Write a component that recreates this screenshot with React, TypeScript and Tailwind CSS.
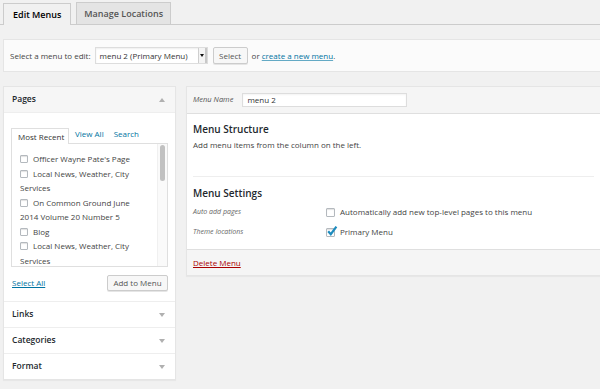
import React from "react";

const Box = ({ checked = false, size = 8 }: { checked?: boolean; size?: number }) => (
  <span
    className={`inline-flex shrink-0 items-center justify-center border border-[#b4b9be] bg-white rounded-[1px] shadow-[inset_0_1px_1px_rgba(0,0,0,0.12)] mr-[5px] align-[-1px] ${
      size === 8 ? "w-[8px] h-[8px]" : "w-[9px] h-[9px]"
    }`}
  >
    {checked && (
      <svg viewBox="0 0 10 10" className="w-[10px] h-[10px] -mt-[3px] ml-[2px] overflow-visible">
        <path d="M1.2 5.2 L3.8 8.2 L9.4 0.6" stroke="#1e8cbe" strokeWidth="2.2" fill="none" />
      </svg>
    )}
  </span>
);

const Arrow = ({ up = false }: { up?: boolean }) => (
  <svg viewBox="0 0 6 4" className="w-[6px] h-[4px]">
    <path d={up ? "M0 4 L3 0 L6 4 Z" : "M0 0 L6 0 L3 4 Z"} fill="#b0b0b0" />
  </svg>
);

const pages: React.ReactNode[] = [
  <>Officer Wayne Pate's Page</>,
  <>
    Local News, Weather, City
    <br />
    Services
  </>,
  <>
    On Common Ground June
    <br />
    2014 Volume 20 Number 5
  </>,
  <>Blog</>,
  <>
    Local News, Weather, City
    <br />
    Services
  </>,
];

const Section = ({ title }: { title: string }) => (
  <div className="h-[26px] border-t border-[#eeeeee] flex items-center justify-between pl-[8px] pr-[10px]">
    <span className="text-[8.5px] font-semibold text-[#23282d]">{title}</span>
    <Arrow />
  </div>
);

export default function App() {
  return (
    <div className="w-[600px] h-[389px] overflow-hidden bg-[#f1f1f1] font-['Open_Sans',sans-serif] text-[#444]">
      {/* tabs */}
      <div className="h-[25px] border-b border-[#cccccc] flex items-end pl-[3px] gap-[5px]">
        <div className="h-[22px] -mb-px px-[9px] flex items-center border border-b-0 border-[#cccccc] bg-[#f1f1f1] text-[9px] font-semibold text-[#000]">
          Edit Menus
        </div>
        <div className="h-[22px] px-[7px] flex items-center border border-b-0 border-[#cccccc] bg-[#e4e4e4] text-[9px] font-semibold text-[#555]">
          Manage Locations
        </div>
      </div>

      {/* manage menus bar */}
      <div className="mt-[14px] ml-[3px] h-[33px] bg-[#fbfbfb] border border-r-0 border-[#e5e5e5] flex items-center pl-[6px] text-[8px]">
        <span>Select a menu to edit:</span>
        <div className="ml-[4px] w-[113px] h-[17px] bg-white border border-[#dddddd] flex items-center shadow-[inset_0_1px_2px_rgba(0,0,0,0.07)]">
          <span className="flex-1 pl-[4px] text-[#333]">menu 2 (Primary Menu)</span>
          <div className="w-[9px] h-full border-l border-[#cfcfcf] bg-[#f4f4f4] flex items-center justify-center shadow-[inset_-2px_0_0_#c8c8c8]">
            <svg viewBox="0 0 4 3" className="w-[4px] h-[3px] -ml-[1px]">
              <path d="M0 0 L4 0 L2 3 Z" fill="#111" />
            </svg>
          </div>
        </div>
        <div className="ml-[5px] w-[35px] h-[17px] flex items-center justify-center border border-[#cccccc] bg-[#f7f7f7] rounded-[2px] shadow-[0_1px_0_#e5e5e5] text-[#555]">
          Select
        </div>
        <span className="ml-[4px]">
          or{" "}
          <span className="text-[#0074a2] underline decoration-[#0074a2]/60">create a new menu</span>.
        </span>
      </div>

      {/* columns */}
      <div className="mt-[14px] flex items-start">
        {/* left column */}
        <div className="ml-[3px] w-[173px] bg-white border border-[#e5e5e5] shadow-[0_1px_1px_rgba(0,0,0,0.04)]">
          <div className="h-[26px] bg-[#f6f6f6] border-b border-[#eeeeee] flex items-center justify-between pl-[8px] pr-[10px]">
            <span className="text-[8.5px] font-semibold text-[#23282d]">Pages</span>
            <Arrow up />
          </div>
          <div className="px-[7px] pt-[14px] pb-[10px]">
            <div className="flex items-end text-[8px] h-[16px]">
              <div className="h-[16px] w-[58px] border border-b-0 border-[#dfdfdf] bg-white flex items-center pl-[6px] text-[#333] -mb-px relative">
                Most Recent
              </div>
              <span className="ml-[6px] pb-[3px] text-[#0074a2]">View All</span>
              <span className="ml-[10px] pb-[3px] text-[#0074a2]">Search</span>
            </div>
            <div className="h-[124px] border border-[#dfdfdf] bg-white flex overflow-hidden">
              <div className="flex-1 pl-[8px] pt-[8px] text-[8px] leading-[14.5px] text-[#444] overflow-hidden">
                {pages.map((p, i) => (
                  <div key={i}>
                    <Box />
                    {p}
                  </div>
                ))}
              </div>
              <div className="w-[10px] border-l border-[#f0f0f0] bg-[#fafafa] pt-[1px] flex justify-center">
                <div className="w-[5px] h-[36px] rounded-full bg-[#c1c1c1]" />
              </div>
            </div>
            <div className="mt-[8px] flex items-center justify-between text-[8px]">
              <span className="text-[#0074a2] underline ml-[1px]">Select All</span>
              <div className="w-[61px] h-[16px] flex items-center justify-center border border-[#cccccc] bg-[#f7f7f7] rounded-[2px] shadow-[0_1px_0_#e5e5e5] text-[#555]">
                Add to Menu
              </div>
            </div>
          </div>
          <Section title="Links" />
          <Section title="Categories" />
          <Section title="Format" />
        </div>

        {/* right column */}
        <div className="ml-[10px] flex-1 bg-white border border-r-0 border-[#e5e5e5] shadow-[0_1px_1px_rgba(0,0,0,0.04)]">
          <div className="h-[27px] bg-[#f5f5f5] border-b border-[#dfdfdf] flex items-center pl-[6px]">
            <span className="text-[7.5px] italic text-[#555]">Menu Name</span>
            <div className="ml-[9px] w-[165px] h-[14px] bg-white border border-[#dddddd] flex items-center pl-[4px] text-[8px] text-[#333] shadow-[inset_0_1px_2px_rgba(0,0,0,0.05)]">
              menu 2
            </div>
          </div>
          <div className="px-[6px]">
            <div className="pt-[8px] text-[10px] leading-[14px] font-semibold text-[#23282d]">Menu Structure</div>
            <div className="mt-[3px] text-[8px] leading-[12px] text-[#444]">Add menu items from the column on the left.</div>
            <div className="mt-[25px] border-t border-[#eeeeee]" />
            <div className="pt-[9px] text-[10px] leading-[14px] font-semibold text-[#23282d]">Menu Settings</div>
            <div className="mt-[6px] flex items-center h-[12px]">
              <span className="w-[133px] text-[7px] italic text-[#666]">Auto add pages</span>
              <span className="flex items-center text-[8px] text-[#444]">
                <Box size={9} />
                Automatically add new top-level pages to this menu
              </span>
            </div>
            <div className="mt-[8px] mb-[11px] flex items-center h-[12px]">
              <span className="w-[133px] text-[7px] italic text-[#666]">Theme locations</span>
              <span className="flex items-center text-[8px] text-[#444]">
                <Box size={9} checked />
                Primary Menu
              </span>
            </div>
          </div>
          <div className="h-[26px] bg-[#f5f5f5] border-t border-[#dfdfdf] flex items-center pl-[6px]">
            <span className="text-[8px] text-[#aa0000] underline">Delete Menu</span>
          </div>
        </div>
      </div>
    </div>
  );
}
